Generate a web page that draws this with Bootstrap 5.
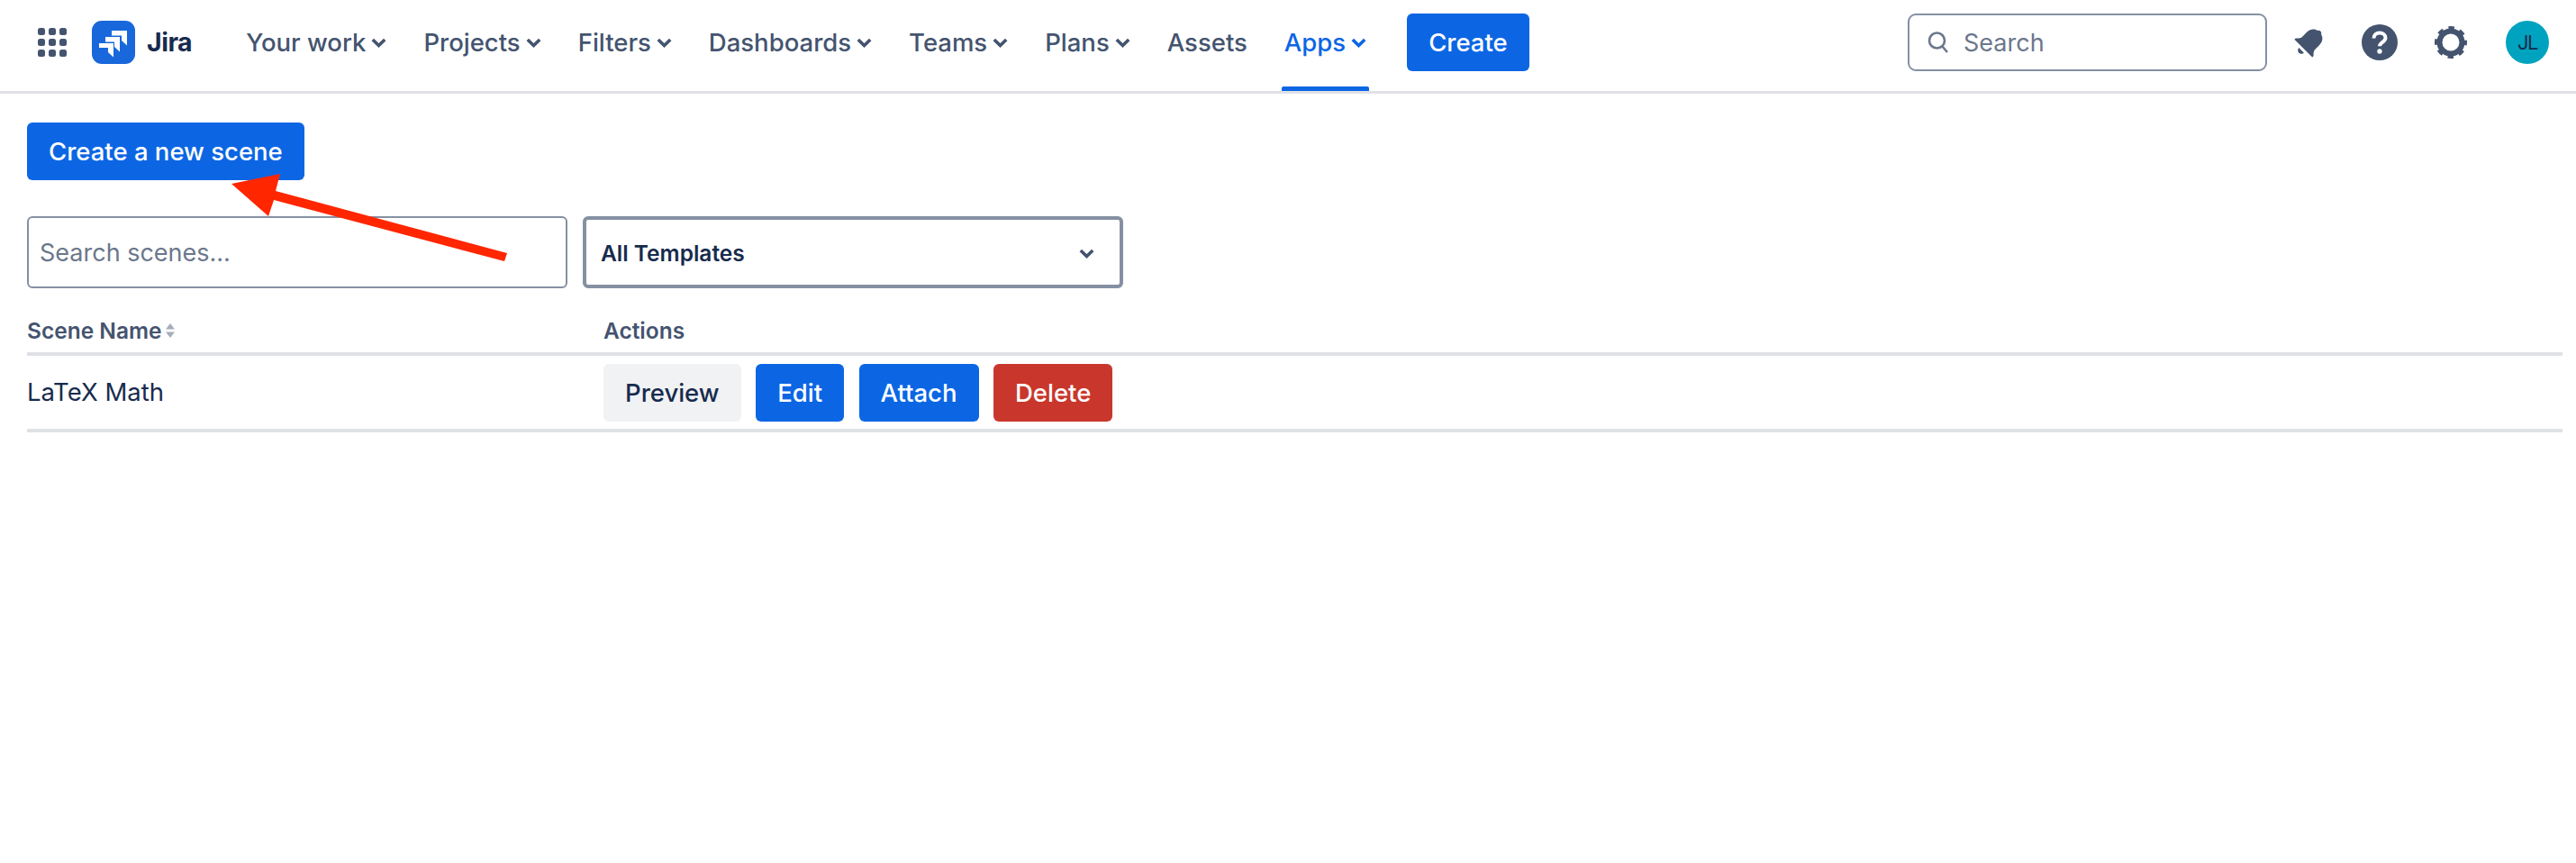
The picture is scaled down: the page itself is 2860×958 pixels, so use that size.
<!DOCTYPE html>
<html lang="en">
<head>
<meta charset="utf-8">
<title>Scenes</title>
<link href="https://cdn.jsdelivr.net/npm/bootstrap@5.3.0/dist/css/bootstrap.min.css" rel="stylesheet">
<style>
body{font-family:Inter,"Liberation Sans",sans-serif;color:#172B4D;background:#fff;font-size:27.5px;position:relative;min-height:958px}
.topbar{height:104px;border-bottom:3px solid #DFE1E6;padding:0 30px 7px 42px;background:#fff}
.brandmark{margin-left:28px;margin-right:57px;gap:13px}
.brandname{font-size:28.5px;font-weight:700;color:#172B4D;letter-spacing:-.5px}
.navi{color:#44546F;font-size:27.5px;font-weight:500;text-decoration:none;height:94px;padding:2px 3px 0;margin-right:35px;gap:6px;position:relative;white-space:nowrap}
.navi svg{margin-top:-2px}
.navi.on{color:#0C66E4;margin-right:42px}
.navi.on::after{content:"";position:absolute;left:0;right:0;bottom:-7px;height:5px;background:#0C66E4;border-radius:2px 2px 0 0}
.blue{background:#0C66E4;color:#fff;border:0;font-size:27.5px;font-weight:500;border-radius:6px;height:64px;padding:0 24px;line-height:64px}
.blue:hover,.blue:active{background:#0055CC!important;color:#fff!important}
.grey{background:#F1F2F4;color:#172B4D}
.grey:hover{background:#DCDFE4;color:#172B4D}
.red{background:#C9372C;color:#fff}
.red:hover{background:#AE2E24;color:#fff}
.topsearch{width:399px;height:64px;border:2px solid #8590A2;border-radius:9px;padding:0 20px;gap:16px;color:#6B778C;margin-right:28px}
.topsearch input{border:0;outline:0;padding:2px 0 0;font-size:27px;width:300px;color:#172B4D;background:transparent}
.topsearch input::placeholder{color:#6B778C;opacity:1}
.gapa{margin-left:39px}
.gapb{margin-left:41px}
.mainarea{padding:32px 15px 0 30px}
.filters{margin-top:40px;gap:17px}
.scenefind{width:600px;height:80px;border:2px solid #8590A2;border-radius:6px;font-size:27px;padding:0 12px;color:#172B4D;box-shadow:none}
.scenefind::placeholder{color:#6B778C;opacity:1}
.scenefind:focus{border-color:#8590A2;box-shadow:none}
.pickbox{width:600px;height:80px;border:4px solid #8590A2;border-radius:6px;padding:2px 28px 0 16px;font-size:24.500px;font-weight:600;color:#172B4D;background:#fff}
.scenetable{margin:32px 0 0;width:100%;--bs-table-border-color:transparent;border-collapse:collapse}
.scenetable th{font-size:24.500px;font-weight:600;color:#44546F;padding:0 0 9px;border-bottom:4px solid #DFE1E6;line-height:30px;height:39px}
.scenetable td{font-size:27.500px;color:#172B4D;padding:9px 0 8px;border-bottom:4px solid #DFE1E6;vertical-align:middle}
.colname{width:640px}
.rowact{gap:16.500px}
.overlayarrow{position:absolute;left:0;top:0;pointer-events:none}
.sorter{margin-left:4px;vertical-align:1px}
.initials{width:48px;height:48px;border-radius:50%;background:#00A3BF;color:#172B4D;font-size:22px;font-weight:400;margin-left:43px;letter-spacing:-1.5px}
</style>
</head>
<body>
<nav class="topbar d-flex align-items-center">
  <svg width="32" height="32" viewBox="0 0 32 32" fill="#44546F" aria-hidden="true">
    <rect x="0" y="0" width="8" height="8" rx="2.5"/><rect x="12" y="0" width="8" height="8" rx="2.5"/><rect x="24" y="0" width="8" height="8" rx="2.5"/>
    <rect x="0" y="12" width="8" height="8" rx="2.5"/><rect x="12" y="12" width="8" height="8" rx="2.5"/><rect x="24" y="12" width="8" height="8" rx="2.5"/>
    <rect x="0" y="24" width="8" height="8" rx="2.5"/><rect x="12" y="24" width="8" height="8" rx="2.5"/><rect x="24" y="24" width="8" height="8" rx="2.5"/>
  </svg>
  <div class="brandmark d-flex align-items-center">
    <svg width="48" height="48" viewBox="0 0 48 48" aria-hidden="true">
      <rect width="48" height="48" rx="11" fill="#1868DB"/>
      <g fill="#fff">
        <path d="M22 11h17v16.5l-6-5.5v-5.6H22z"/>
        <path d="M15 18h16v16.500l-6-5.500v-5.500H15z"/>
        <path d="M8 25h16v15.500l-6-5.500v-5H8z"/>
      </g>
    </svg>
    <span class="brandname">Jira</span>
  </div>
  <a class="navi d-flex align-items-center" href="#">Your work <svg width="17" height="11" viewBox="0 0 17 11" fill="none" stroke="currentColor" stroke-width="3.600" aria-hidden="true"><path d="M1.800 2l6.700 6.500L15.200 2"/></svg></a>
  <a class="navi d-flex align-items-center" href="#">Projects <svg width="17" height="11" viewBox="0 0 17 11" fill="none" stroke="currentColor" stroke-width="3.600" aria-hidden="true"><path d="M1.800 2l6.700 6.500L15.200 2"/></svg></a>
  <a class="navi d-flex align-items-center" href="#">Filters <svg width="17" height="11" viewBox="0 0 17 11" fill="none" stroke="currentColor" stroke-width="3.600" aria-hidden="true"><path d="M1.800 2l6.700 6.500L15.200 2"/></svg></a>
  <a class="navi d-flex align-items-center" href="#">Dashboards <svg width="17" height="11" viewBox="0 0 17 11" fill="none" stroke="currentColor" stroke-width="3.600" aria-hidden="true"><path d="M1.800 2l6.700 6.500L15.200 2"/></svg></a>
  <a class="navi d-flex align-items-center" href="#">Teams <svg width="17" height="11" viewBox="0 0 17 11" fill="none" stroke="currentColor" stroke-width="3.600" aria-hidden="true"><path d="M1.800 2l6.700 6.500L15.200 2"/></svg></a>
  <a class="navi d-flex align-items-center" href="#">Plans <svg width="17" height="11" viewBox="0 0 17 11" fill="none" stroke="currentColor" stroke-width="3.600" aria-hidden="true"><path d="M1.800 2l6.700 6.500L15.200 2"/></svg></a>
  <a class="navi d-flex align-items-center" href="#">Assets</a>
  <a class="navi on d-flex align-items-center" href="#">Apps <svg width="17" height="11" viewBox="0 0 17 11" fill="none" stroke="currentColor" stroke-width="3.600" aria-hidden="true"><path d="M1.800 2l6.700 6.500L15.200 2"/></svg></a>
  <button class="btn blue" type="button">Create</button>
  <div class="ms-auto d-flex align-items-center">
    <div class="topsearch d-flex align-items-center">
      <svg width="24" height="26" viewBox="0 0 24 26" fill="none" stroke="#6B778C" stroke-width="2.600" aria-hidden="true"><ellipse cx="10.500" cy="11" rx="8.500" ry="8.500"/><path d="M16.500 17.500l5.500 6.500"/></svg>
      <input type="text" placeholder="Search" aria-label="Search">
    </div>
    <svg width="38" height="38" viewBox="0 0 38 38" fill="#44546F" aria-hidden="true">
      <path transform="rotate(45 19 19)" d="M19 1.500c1.500 0 2.500.8 2.800 2 5 1 7.200 5.300 7.200 10v6.500c0 2.500 1.800 4.500 4 6.500v2H5V26.500C7.200 24.500 9 22.500 9 20v-6.500c0-4.700 2.200-9 7.200-10 .3-1.200 1.300-2 2.800-2z"/>
      <path transform="rotate(45 19 19)" d="M15 31.500h8c0 2-1.800 4-4 4s-4-2-4-4z"/>
    </svg>
    <svg class="gapa" width="40" height="40" viewBox="0 0 40 40" aria-hidden="true">
      <circle cx="20" cy="20" r="20" fill="#44546F"/>
      <path d="M13.500 15.500c0-3.800 3-6 6.500-6s6.500 2.200 6.500 5.500c0 4.800-6.500 4.800-6.500 9.200" fill="none" stroke="#fff" stroke-width="4"/>
      <circle cx="20" cy="30" r="2.700" fill="#fff"/>
    </svg>
    <svg class="gapb" width="36" height="36" viewBox="0 0 36 36" fill="none" stroke="#44546F" aria-hidden="true">
      <circle cx="18" cy="18" r="12.500" stroke-width="6"/>
      <circle cx="18" cy="18" r="15.500" stroke-width="5" stroke-dasharray="6.200 6" stroke-dashoffset="3.100"/>
    </svg>
    <div class="initials d-flex align-items-center justify-content-center">JL</div>
  </div>
</nav>
<main class="mainarea">
  <button class="btn blue d-block" type="button">Create a new scene</button>
  <div class="filters d-flex align-items-center">
    <input class="form-control scenefind" type="text" placeholder="Search scenes..." aria-label="Search scenes">
    <div class="pickbox d-flex align-items-center justify-content-between">
      <span>All Templates</span>
      <svg width="17" height="11" viewBox="0 0 17 11" fill="none" stroke="#44546F" stroke-width="3.600" aria-hidden="true"><path d="M1.800 2l6.700 6.500L15.200 2"/></svg>
    </div>
  </div>
  <table class="table scenetable">
    <thead>
      <tr>
        <th class="colname">Scene Name<svg class="sorter" width="10" height="16" viewBox="0 0 10 16" fill="#A5ADBA" aria-hidden="true"><path d="M5 0l5 6.500H0zM5 16l5-6.500H0z"/></svg></th>
        <th>Actions</th>
      </tr>
    </thead>
    <tbody>
      <tr>
        <td>LaTeX Math</td>
        <td>
          <div class="d-flex rowact">
            <button class="btn blue grey" type="button">Preview</button>
            <button class="btn blue" type="button">Edit</button>
            <button class="btn blue" type="button">Attach</button>
            <button class="btn blue red" type="button">Delete</button>
          </div>
        </td>
      </tr>
    </tbody>
  </table>
</main>
<svg class="overlayarrow" width="640" height="320" viewBox="0 0 640 320" aria-hidden="true"><polygon fill="#FF2600" points="257,204 311,193 306,212 563,281 560,290 304,222 298,240"/></svg>
</body>
</html>
